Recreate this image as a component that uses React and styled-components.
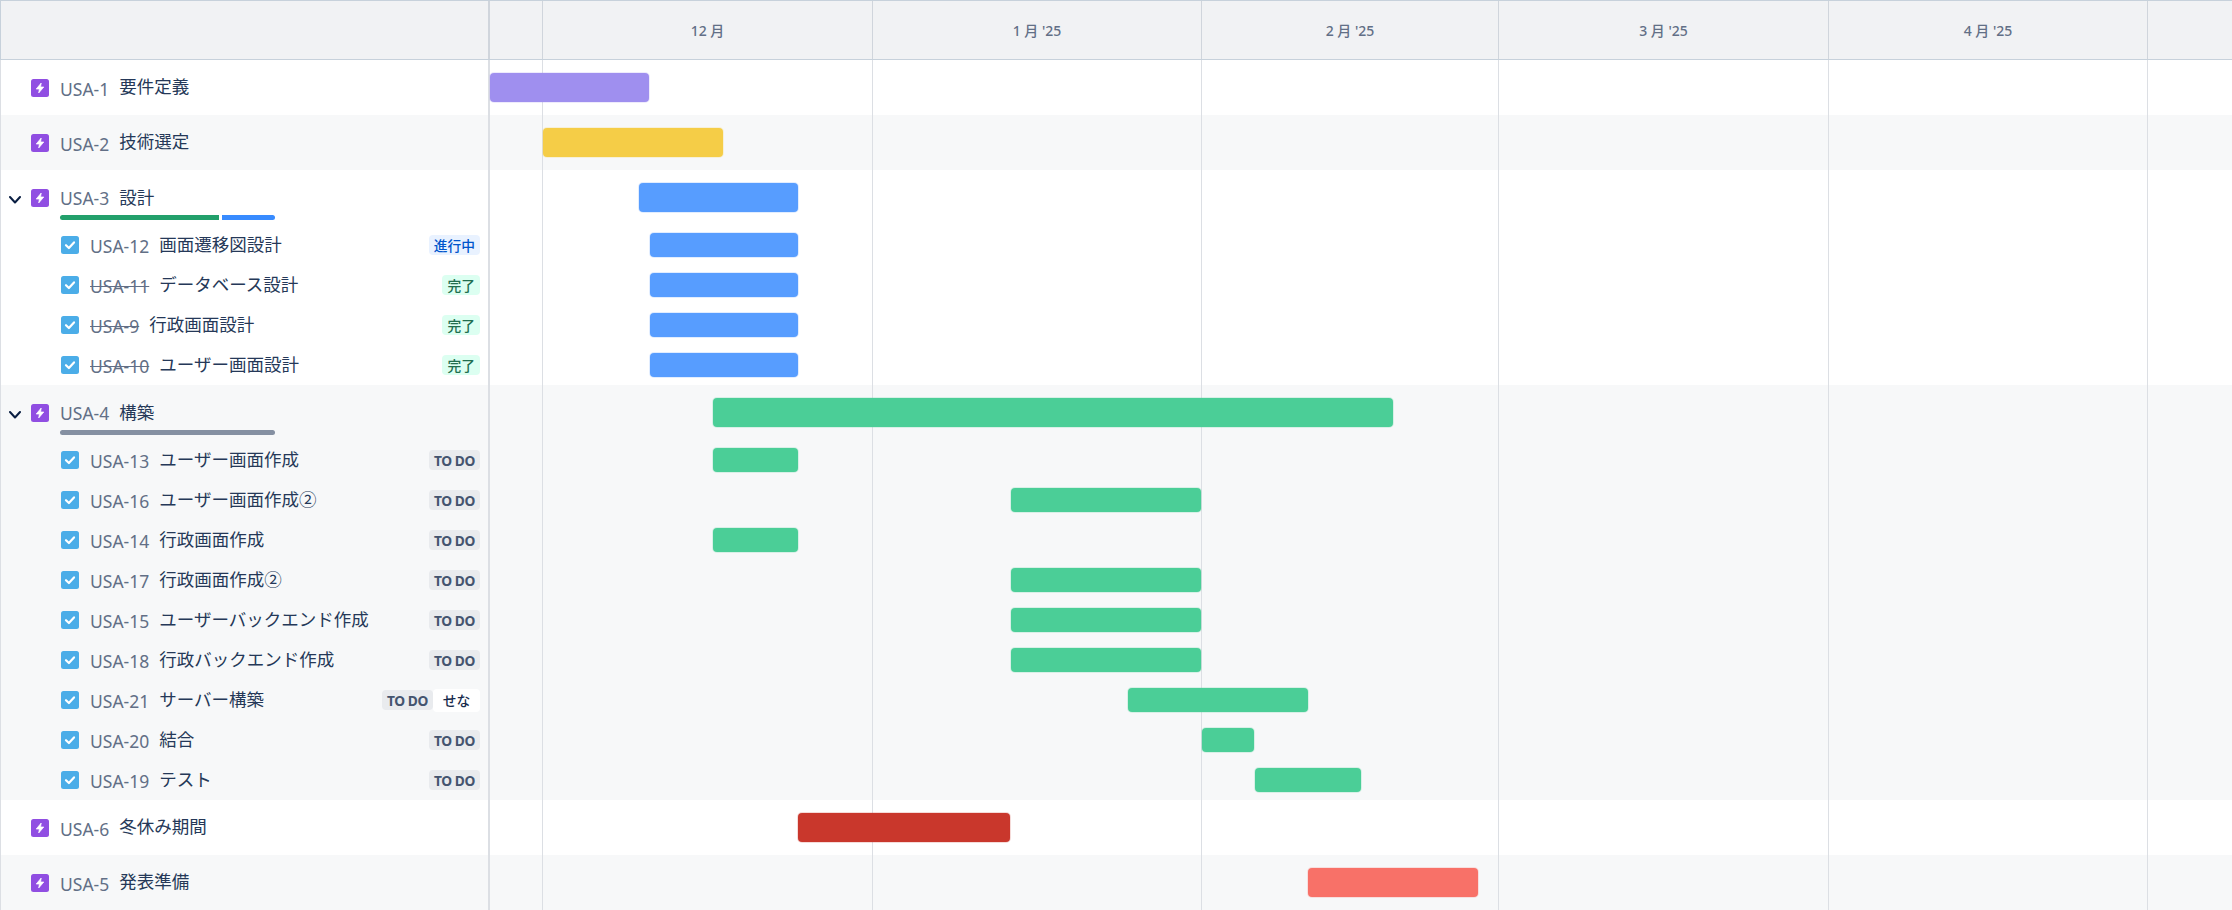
import React from "react";
import styled, { createGlobalStyle } from "styled-components";

const SIDE = 490;

const months = [
  { label: "", end: 543 },
  { label: "12 月", end: 873 },
  { label: "1 月 '25", end: 1202 },
  { label: "2 月 '25", end: 1499 },
  { label: "3 月 '25", end: 1829 },
  { label: "4 月 '25", end: 2148 },
  { label: "", end: 2232 },
];

const PURPLE = "#9f8fef";
const YELLOW = "#f5cd47";
const BLUE = "#579dff";
const GREEN = "#4bce97";
const RED = "#c9372c";
const SALMON = "#f87168";

const groups = [
  { id: "USA-1", title: "要件定義", bar: [490, 649, PURPLE] },
  { id: "USA-2", title: "技術選定", bar: [543, 723, YELLOW], alt: true },
  {
    id: "USA-3",
    title: "設計",
    bar: [639, 798, BLUE],
    progress: [
      { w: 159, color: "#22a06b", square: "right" },
      { w: 53, color: "#388bff", square: "left" },
    ],
    children: [
      { id: "USA-12", title: "画面遷移図設計", status: "progress", bar: [650, 798, BLUE] },
      { id: "USA-11", title: "データベース設計", status: "done", bar: [650, 798, BLUE] },
      { id: "USA-9", title: "行政画面設計", status: "done", bar: [650, 798, BLUE] },
      { id: "USA-10", title: "ユーザー画面設計", status: "done", bar: [650, 798, BLUE] },
    ],
  },
  {
    id: "USA-4",
    title: "構築",
    alt: true,
    bar: [713, 1393, GREEN],
    progress: [{ w: 215, color: "#8590a2" }],
    children: [
      { id: "USA-13", title: "ユーザー画面作成", status: "todo", bar: [713, 798, GREEN] },
      { id: "USA-16", title: "ユーザー画面作成②", status: "todo", bar: [1011, 1201, GREEN] },
      { id: "USA-14", title: "行政画面作成", status: "todo", bar: [713, 798, GREEN] },
      { id: "USA-17", title: "行政画面作成②", status: "todo", bar: [1011, 1201, GREEN] },
      { id: "USA-15", title: "ユーザーバックエンド作成", status: "todo", bar: [1011, 1201, GREEN] },
      { id: "USA-18", title: "行政バックエンド作成", status: "todo", bar: [1011, 1201, GREEN] },
      { id: "USA-21", title: "サーバー構築", status: "todo", who: "せな", bar: [1128, 1308, GREEN] },
      { id: "USA-20", title: "結合", status: "todo", bar: [1202, 1254, GREEN] },
      { id: "USA-19", title: "テスト", status: "todo", bar: [1255, 1361, GREEN] },
    ],
  },
  { id: "USA-6", title: "冬休み期間", bar: [798, 1010, RED] },
  { id: "USA-5", title: "発表準備", bar: [1308, 1478, SALMON], alt: true },
];

const statusLabel = { todo: "TO DO", progress: "進行中", done: "完了" };

const App = () => {
  return (
    <Page>
      <GlobalStyle />
      <Header>
        <SideHead />
        {months.map((m, i) => (
          <Month key={i} $width={m.end - (i === 0 ? SIDE : months[i - 1].end)}>
            {m.label}
          </Month>
        ))}
      </Header>
      <Body>
        {groups.map((g) => (
          <Group key={g.id} $alt={g.alt}>
            <Row $height={55}>
              <SideCell $parent={!!g.progress}>
                <IssueLine $indent={g.children ? 0 : 30}>
                  {g.children && (
                    <Chevron viewBox="0 0 12 8">
                      <polyline points="1,1 6,6.5 11,1" />
                    </Chevron>
                  )}
                  <EpicIcon viewBox="0 0 18 18">
                    <rect width="18" height="18" rx="2.5" fill="#904ee2" />
                    <path
                      d="M10.2 4 5.2 10h3.2l-.7 4 5.1-6H9.6z"
                      fill="#fff"
                      stroke="#fff"
                      strokeWidth="0.7"
                      strokeLinejoin="round"
                    />
                  </EpicIcon>
                  <Key $raised={!!g.progress}>{g.id}</Key>
                  <Title>{g.title}</Title>
                </IssueLine>
                {g.progress && (
                  <Progress>
                    {g.progress.map((p) => (
                      <ProgressPart key={p.color} $width={p.w} $color={p.color} $square={p.square} />
                    ))}
                  </Progress>
                )}
              </SideCell>
              <Track>
                <Bar $start={g.bar[0]} $end={g.bar[1]} $color={g.bar[2]} $height={29} />
              </Track>
            </Row>
            {g.children &&
              g.children.map((c) => (
                <Row key={c.id} $height={40}>
                  <SideCell>
                    <IssueLine $indent={60}>
                      <TaskIcon viewBox="0 0 18 18">
                        <rect width="18" height="18" rx="2.5" fill="#4bade8" />
                        <polyline points="5,9.2 7.9,12 13,6.4" />
                      </TaskIcon>
                      <Key $done={c.status === "done"}>{c.id}</Key>
                      <Title>{c.title}</Title>
                      <Right>
                        <Status $kind={c.status}>{statusLabel[c.status]}</Status>
                        {c.who && <Assignee>{c.who}</Assignee>}
                      </Right>
                    </IssueLine>
                  </SideCell>
                  <Track>
                    <Bar $start={c.bar[0]} $end={c.bar[1]} $color={c.bar[2]} $height={24} />
                  </Track>
                </Row>
              ))}
          </Group>
        ))}
        <GridLines>
          {months.slice(0, -1).map((m) => (
            <GridLine key={m.end} $left={m.end - 1 - SIDE} />
          ))}
        </GridLines>
      </Body>
    </Page>
  );
};
export default App;

const GlobalStyle = createGlobalStyle`
  html, body {
    margin: 0;
    padding: 0;
    background: #fff;
  }
  body {
    font-family: "Noto Sans", "Noto Sans CJK JP", sans-serif;
    color: #172b4d;
  }
`;

const Page = styled.div`
  width: 2232px;
  height: 910px;
  overflow: hidden;
`;

const Header = styled.div`
  display: flex;
  height: 60px;
  box-sizing: border-box;
  background: #f1f2f4;
  border-top: 1px solid #c7d1db;
  border-bottom: 1px solid #c7d1db;
`;

const SideHead = styled.div`
  flex: none;
  width: 490px;
  box-sizing: border-box;
  border-left: 1px solid #c7d1db;
  border-right: 2px solid #d0d5dc;
`;

const Month = styled.div`
  flex: none;
  width: ${(p) => p.$width}px;
  box-sizing: border-box;
  display: flex;
  align-items: center;
  justify-content: center;
  font-size: 14px;
  font-weight: 500;
  color: #626f86;
  padding-bottom: 1px;
  border-right: 1px solid #d0d5dc;
  &:last-child {
    border-right: 0;
  }
`;

const Body = styled.div`
  position: relative;
`;

const Group = styled.div`
  background: ${(p) => (p.$alt ? "#f7f8f9" : "#fff")};
`;

const Row = styled.div`
  display: flex;
  height: ${(p) => p.$height}px;
`;

const SideCell = styled.div`
  flex: none;
  width: ${SIDE}px;
  box-sizing: border-box;
  padding-right: 8px;
  padding-top: ${(p) => (p.$parent ? "16px" : "0")};
  border-left: 1px solid #dcdfe4;
  border-right: 2px solid #dcdfe4;
  display: flex;
  flex-direction: column;
  justify-content: ${(p) => (p.$parent ? "flex-start" : "center")};
`;

const IssueLine = styled.div`
  display: flex;
  align-items: center;
  height: 24px;
  padding-left: ${(p) => p.$indent}px;
`;

const Chevron = styled.svg`
  flex: none;
  width: 12px;
  height: 8px;
  margin: 3px 10px 0 8px;
  fill: none;
  stroke: #091e42;
  stroke-width: 2;
  stroke-linecap: round;
  stroke-linejoin: round;
`;

const EpicIcon = styled.svg`
  flex: none;
  width: 18px;
  height: 18px;
`;

const TaskIcon = styled.svg`
  flex: none;
  width: 18px;
  height: 18px;
  polyline {
    fill: none;
    stroke: #fff;
    stroke-width: 2.2;
    stroke-linecap: round;
    stroke-linejoin: round;
  }
`;

const Key = styled.span`
  margin-left: 11px;
  font-size: 17.5px;
  color: #626f86;
  position: relative;
  top: ${(p) => (p.$raised ? "0" : "1px")};
  white-space: nowrap;
  text-decoration: ${(p) => (p.$done ? "line-through" : "none")};
`;

const Title = styled.span`
  margin-left: 10px;
  font-size: 17.5px;
  color: #253858;
  white-space: nowrap;
  position: relative;
  top: -2px;
`;

const Right = styled.div`
  margin-left: auto;
  display: flex;
  align-items: center;
`;

const statusColors = {
  todo: "background: #091e420f; color: #44546f; font-weight: 700; letter-spacing: -0.4px;",
  progress: "background: #e9f2ff; color: #0055cc; font-weight: 500;",
  done: "background: #dcfff1; color: #216e4e; font-weight: 500;",
};

const Status = styled.span`
  display: flex;
  align-items: center;
  height: 20px;
  padding: 0 5px;
  border-radius: 4px;
  font-size: 13.75px;
  white-space: nowrap;
  ${(p) => statusColors[p.$kind]}
`;

const Assignee = styled.span`
  display: flex;
  align-items: center;
  justify-content: center;
  width: 47px;
  height: 23px;
  border-radius: 4px;
  background: #fff;
  font-size: 13.75px;
  font-weight: 500;
  color: #172b4d;
`;

const Progress = styled.div`
  display: flex;
  gap: 3px;
  margin: 5px 0 0 59px;
`;

const ProgressPart = styled.div`
  width: ${(p) => p.$width}px;
  height: 5px;
  background: ${(p) => p.$color};
  border-radius: ${(p) =>
    p.$square === "right" ? "3px 0 0 3px" : p.$square === "left" ? "0 3px 3px 0" : "3px"};
`;

const Track = styled.div`
  flex: 1;
  min-width: 0;
  display: flex;
  align-items: center;
`;

const Bar = styled.div`
  position: relative;
  z-index: 2;
  flex: none;
  box-sizing: border-box;
  margin-left: ${(p) => p.$start - SIDE}px;
  width: ${(p) => p.$end - p.$start}px;
  height: ${(p) => p.$height}px;
  border-radius: 4px;
  background: ${(p) => p.$color};
  box-shadow: 0 0 0 1px ${(p) => p.$color}2e;
`;

const GridLines = styled.div`
  position: absolute;
  top: 0;
  bottom: 0;
  left: ${SIDE}px;
  right: 0;
  z-index: 1;
  pointer-events: none;
`;

const GridLine = styled.div`
  position: absolute;
  top: 0;
  bottom: 0;
  left: ${(p) => p.$left}px;
  width: 1px;
  background: #dcdfe4;
`;
